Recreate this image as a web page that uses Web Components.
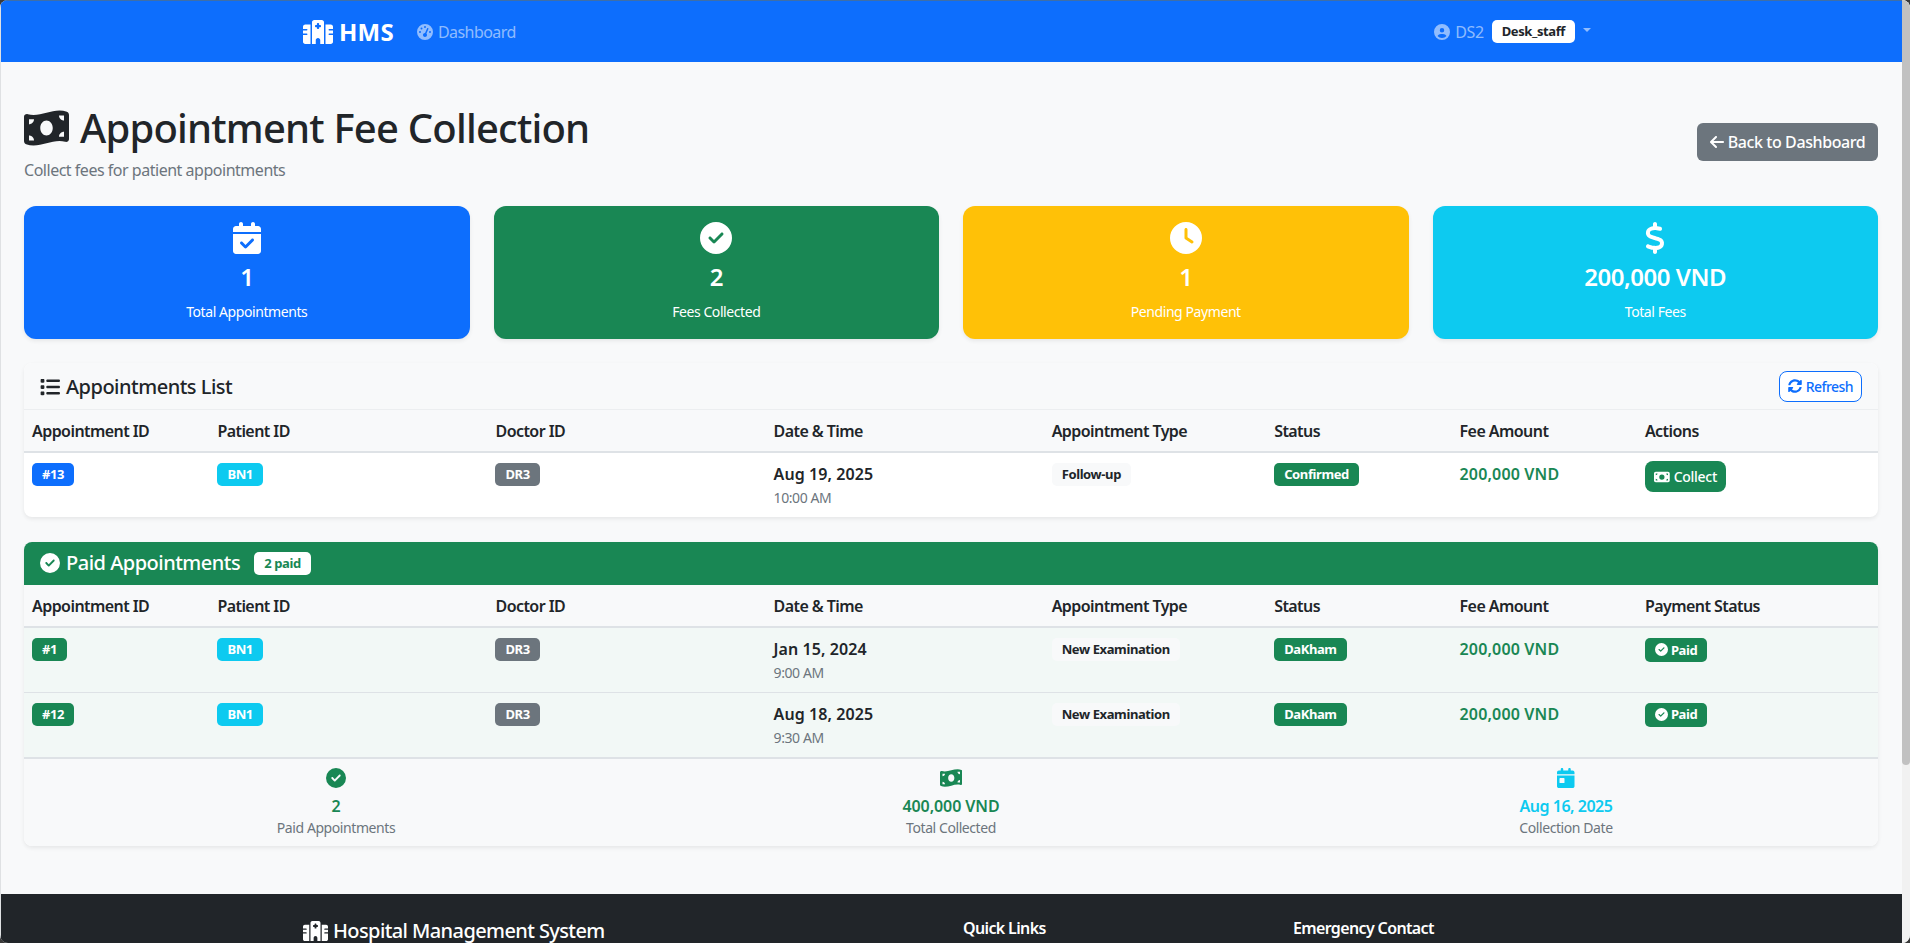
<!DOCTYPE html>
<html lang="en">
<head>
<meta charset="utf-8">
<title>Appointment Fee Collection</title>
<style>
  html, body { margin: 0; height: 943px; overflow: hidden; background: #3a3a3a; }
  body { font-family: "Noto Sans", "Open Sans", sans-serif; color: #212529; }
</style>
</head>
<body>
<hms-app></hms-app>

<script>
const ICONS = {
  hospital: [640, 'M192 48c0-26.5 21.5-48 48-48H400c26.5 0 48 21.5 48 48V512H368V432c0-26.5-21.5-48-48-48s-48 21.5-48 48v80H192V48zM48 96H160V512H48c-26.5 0-48-21.5-48-48V320H80c8.8 0 16-7.2 16-16s-7.2-16-16-16H0V224H80c8.8 0 16-7.2 16-16s-7.2-16-16-16H0V144c0-26.5 21.5-48 48-48zm544 0c26.5 0 48 21.5 48 48v48H560c-8.8 0-16 7.2-16 16s7.2 16 16 16h80v64H560c-8.8 0-16 7.2-16 16s7.2 16 16 16h80V464c0 26.5-21.5 48-48 48H480V96H592zM312 64c-8.8 0-16 7.2-16 16v24H272c-8.8 0-16 7.2-16 16v16c0 8.8 7.2 16 16 16h24v24c0 8.8 7.2 16 16 16h16c8.8 0 16-7.2 16-16V152h24c8.8 0 16-7.2 16-16V120c0-8.8-7.2-16-16-16H344V80c0-8.8-7.2-16-16-16H312z'],
  gauge: [512, 'M0 256a256 256 0 1 1 512 0A256 256 0 1 1 0 256zM288 96a32 32 0 1 0 -64 0 32 32 0 1 0 64 0zM256 416c35.3 0 64-28.7 64-64c0-17.4-6.9-33.1-18.1-44.6L366 161.7c5.3-12.1-.2-26.3-12.3-31.6s-26.3 .2-31.6 12.3L257.9 288c-.6 0-1.3 0-1.9 0c-35.3 0-64 28.7-64 64s28.7 64 64 64zM176 144a32 32 0 1 0 -64 0 32 32 0 1 0 64 0zM96 288a32 32 0 1 0 0-64 32 32 0 1 0 0 64zm352-32a32 32 0 1 0 -64 0 32 32 0 1 0 64 0z'],
  user: [512, 'M399 384.2C376.9 345.8 335.4 320 288 320H224c-47.4 0-88.9 25.8-111 64.2c35.2 39.2 86.2 63.8 143 63.8s107.8-24.7 143-63.8zM0 256a256 256 0 1 1 512 0A256 256 0 1 1 0 256zm256 16a72 72 0 1 0 0-144 72 72 0 1 0 0 144z'],
  wave: [576, 'M0 112.5V422.3c0 18 10.1 35 27 41.3c87 32.5 174 10.3 261-11.9c79.8-20.3 159.6-40.7 239.3-18.9c23 6.3 48.7-9.5 48.7-33.4V89.7c0-18-10.1-35-27-41.3C462 15.9 375 38.1 288 60.3C208.2 80.6 128.4 100.9 48.7 79.1C25.6 72.8 0 88.6 0 112.5zM288 352c-44.2 0-80-43-80-96s35.8-96 80-96s80 43 80 96s-35.8 96-80 96zM64 352c35.3 0 64 28.7 64 64H64V352zm64-208c0 35.3-28.7 64-64 64V144h64zM512 304v64H448c0-35.3 28.7-64 64-64zM448 96h64v64c-35.3 0-64-28.7-64-64z'],
  bill: [576, 'M64 64C28.7 64 0 92.7 0 128V384c0 35.3 28.7 64 64 64H512c35.3 0 64-28.7 64-64V128c0-35.3-28.7-64-64-64H64zm64 320H64V320c35.3 0 64 28.7 64 64zM64 192V128h64c0 35.3-28.7 64-64 64zM448 384c0-35.3 28.7-64 64-64v64H448zm64-192c-35.3 0-64-28.7-64-64h64v64zM288 160a96 96 0 1 1 0 192 96 96 0 1 1 0-192z'],
  back: [448, 'M9.4 233.4c-12.5 12.5-12.5 32.8 0 45.3l160 160c12.5 12.5 32.8 12.5 45.3 0s12.5-32.8 0-45.3L109.2 288 416 288c17.7 0 32-14.3 32-32s-14.3-32-32-32l-306.7 0L214.6 118.6c12.5-12.5 12.5-32.8 0-45.3s-32.8-12.5-45.3 0l-160 160z'],
  calcheck: [448, 'M128 0c17.7 0 32 14.3 32 32V64H288V32c0-17.7 14.3-32 32-32s32 14.3 32 32V64h48c26.5 0 48 21.5 48 48v48H0V112C0 85.5 21.5 64 48 64H96V32c0-17.7 14.3-32 32-32zM0 192H448V464c0 26.5-21.5 48-48 48H48c-26.5 0-48-21.5-48-48V192zM329 305c9.4-9.4 9.4-24.6 0-33.9s-24.6-9.4-33.9 0l-95 95-47-47c-9.4-9.4-24.6-9.4-33.9 0s-9.4 24.6 0 33.9l64 64c9.4 9.4 24.6 9.4 33.9 0L329 305z'],
  calday: [448, 'M128 0c17.7 0 32 14.3 32 32V64H288V32c0-17.7 14.3-32 32-32s32 14.3 32 32V64h48c26.5 0 48 21.5 48 48v48H0V112C0 85.5 21.5 64 48 64H96V32c0-17.7 14.3-32 32-32zM0 192H448V464c0 26.5-21.5 48-48 48H48c-26.5 0-48-21.5-48-48V192zm80 64c-8.8 0-16 7.2-16 16v96c0 8.8 7.2 16 16 16h96c8.8 0 16-7.2 16-16V272c0-8.8-7.2-16-16-16H80z'],
  check: [512, 'M256 512A256 256 0 1 0 256 0a256 256 0 1 0 0 512zM369 209L241 337c-9.4 9.4-24.6 9.4-33.9 0l-64-64c-9.4-9.4-9.4-24.6 0-33.9s24.6-9.4 33.9 0l47 47L335 175c9.4-9.4 24.6-9.4 33.9 0s9.4 24.6 0 33.9z'],
  clock: [512, 'M256 0a256 256 0 1 1 0 512A256 256 0 1 1 256 0zM232 120V256c0 8 4 15.5 10.7 20l96 64c11 7.4 25.9 4.4 33.3-6.7s4.4-25.9-6.7-33.3L280 243.2V120c0-13.3-10.7-24-24-24s-24 10.7-24 24z'],
  dollar: [320, 'M160 0c17.7 0 32 14.3 32 32V67.7c1.6 .2 3.1 .4 4.7 .7c.4 .1 .7 .1 1.1 .2l48 8.8c17.4 3.2 28.9 19.9 25.7 37.2s-19.9 28.9-37.2 25.7l-47.5-8.7c-31.3-4.6-58.9-1.5-78.3 6.2s-27.2 18.3-29 28.1c-2 10.7-.5 16.7 1.2 20.4c1.8 3.9 5.5 8.3 12.8 13.2c16.3 10.7 41.3 17.7 73.7 26.3l2.9 .8c28.6 7.6 63.6 16.8 89.6 33.8c14.2 9.3 27.6 21.9 35.9 39.5c8.5 17.9 10.3 37.9 6.4 59.2c-6.9 38-33.1 63.4-65.6 76.7c-13.7 5.6-28.6 9.2-44.4 11V480c0 17.7-14.3 32-32 32s-32-14.3-32-32V445.1c-.4-.1-.9-.1-1.3-.2l-.2 0 0 0c-24.4-3.8-64.5-14.3-91.5-26.3c-16.1-7.2-23.4-26.1-16.2-42.2s26.1-23.4 42.2-16.2c20.9 9.3 55.3 18.5 75.2 21.6c31.9 4.7 58.2 2 76-5.3c16.9-6.9 24.6-16.9 26.8-28.9c1.9-10.6 .4-16.7-1.3-20.4c-1.9-4-5.6-8.4-13-13.3c-16.4-10.7-41.5-17.7-74-26.3l-2.8-.7 0 0C119.4 279.3 84.4 270 58.4 253c-14.2-9.3-27.5-22-35.8-39.6c-8.4-17.9-10.1-37.9-6.1-59.2C23.7 116 52.3 91.2 84.8 78.3c13.3-5.3 27.9-8.9 43.2-11V32c0-17.7 14.3-32 32-32z'],
  list: [512, 'M40 48C26.7 48 16 58.7 16 72v48c0 13.3 10.7 24 24 24H88c13.3 0 24-10.7 24-24V72c0-13.3-10.7-24-24-24H40zM192 64c-17.7 0-32 14.3-32 32s14.3 32 32 32H480c17.7 0 32-14.3 32-32s-14.3-32-32-32H192zm0 160c-17.7 0-32 14.3-32 32s14.3 32 32 32H480c17.7 0 32-14.3 32-32s-14.3-32-32-32H192zm0 160c-17.7 0-32 14.3-32 32s14.3 32 32 32H480c17.7 0 32-14.3 32-32s-14.3-32-32-32H192zM16 232v48c0 13.3 10.7 24 24 24H88c13.3 0 24-10.7 24-24V232c0-13.3-10.7-24-24-24H40c-13.3 0-24 10.7-24 24zM40 368c-13.3 0-24 10.7-24 24v48c0 13.3 10.7 24 24 24H88c13.3 0 24-10.7 24-24V392c0-13.3-10.7-24-24-24H40z'],
  sync: [512, 'M370.72 133.28C339.458 104.008 298.888 87.962 255.848 88c-77.458.068-144.328 53.178-162.791 126.85-1.344 5.363-6.122 9.15-11.651 9.15H24.103c-7.498 0-13.194-6.807-11.807-14.176C33.933 94.924 134.813 8 256 8c66.448 0 126.791 26.136 171.315 68.685L463.03 40.97C478.149 25.851 504 36.559 504 57.941V192c0 13.255-10.745 24-24 24H345.941c-21.382 0-32.09-25.851-16.971-40.971l41.75-41.749zM32 296h134.059c21.382 0 32.09 25.851 16.971 40.971l-41.75 41.75c31.262 29.273 71.835 45.319 114.876 45.28 77.418-.07 144.315-53.144 162.787-126.849 1.344-5.363 6.122-9.15 11.651-9.15h57.304c7.498 0 13.194 6.807 11.807 14.176C478.067 417.076 377.187 504 256 504c-66.448 0-126.791-26.136-171.315-68.685L48.97 471.03C33.851 486.149 8 475.441 8 454.059V320c0-13.255 10.745-24 24-24z']
};

// icon sized like font awesome: height = font-size, width from the viewbox
class FaIcon extends HTMLElement {
  connectedCallback() {
    if (this.shadowRoot) return;
    const [w, d] = ICONS[this.getAttribute('name')];
    const root = this.attachShadow({ mode: 'open' });
    root.innerHTML = `
      <style>
        :host { display: inline-block; flex: none; height: 1em; width: ${w / 512}em; line-height: 0; vertical-align: -0.125em; }
        svg { width: 100%; height: 100%; display: block; fill: currentColor; }
      </style>
      <svg viewBox="0 0 ${w} 512"><path d="${d}"/></svg>`;
  }
}

class HmsBadge extends HTMLElement {
  connectedCallback() {
    if (this.shadowRoot) return;
    const root = this.attachShadow({ mode: 'open' });
    root.innerHTML = `
      <style>
        :host {
          display: inline-block; padding: 4px 10px; border-radius: 5px;
          font-size: 13px; line-height: 15px; font-weight: 700; white-space: nowrap;
          letter-spacing: -0.03em; vertical-align: top;
          color: var(--fg, #fff); background: var(--bg, #6c757d);
        }
      </style>
      <slot></slot>`;
  }
}

class HmsNavbar extends HTMLElement {
  constructor() {
    super();
    this.attachShadow({ mode: 'open' }).innerHTML = `
      <style>
        :host { display: block; background: #0d6efd; height: 62px; flex: none; border-top: 1px solid #3f6fa8; box-sizing: border-box; }
        .wrap { width: 1296px; margin: 0 auto; height: 100%; display: flex; align-items: center; justify-content: space-between; }
        .left, .right { display: flex; align-items: center; }
        .brand { color: #fff; font-size: 24px; line-height: 29px; font-weight: 700; display: flex; align-items: center; gap: 6px; letter-spacing: 0.01em; }
        .link { color: rgba(255,255,255,.55); font-size: 16px; margin-left: 23px; display: flex; align-items: center; gap: 5px; letter-spacing: -0.035em; }
        .user { color: rgba(255,255,255,.55); font-size: 16px; display: flex; align-items: center; gap: 5px; letter-spacing: -0.025em; }
        .caret { width: 0; height: 0; border-top: 4.8px solid rgba(255,255,255,.55); border-left: 4.8px solid transparent; border-right: 4.8px solid transparent; margin: 0 8px 3px 8px; }
        hms-badge { --bg: #fff; --fg: #212529; margin-left: 8px; padding: 4px 10px; }
      </style>
      <div class="wrap">
        <div class="left">
          <div class="brand"><fa-icon name="hospital"></fa-icon><span>HMS</span></div>
          <div class="link"><fa-icon name="gauge"></fa-icon><span>Dashboard</span></div>
        </div>
        <div class="right">
          <div class="user"><fa-icon name="user"></fa-icon><span>DS2</span></div>
          <hms-badge>Desk_staff</hms-badge>
          <span class="caret"></span>
        </div>
      </div>`;
  }
}

class PageHeader extends HTMLElement {
  constructor() {
    super();
    this.attachShadow({ mode: 'open' }).innerHTML = `
      <style>
        :host { display: flex; align-items: center; justify-content: space-between; padding-top: 42px; margin-bottom: 24px; }
        h1 { margin: 0 0 6px; font-size: 40px; line-height: 48px; font-weight: 500; letter-spacing: -0.02em; display: flex; align-items: center; gap: 11px; }
        p { margin: 0; color: #6c757d; font-size: 16px; line-height: 24px; letter-spacing: -0.03em; }
        .back { background: #6c757d; color: #fff; height: 38px; box-sizing: border-box; width: 181px; border-radius: 6px; font-size: 16px; font-weight: 500; display: flex; align-items: center; justify-content: center; gap: 4px; margin-bottom: 3px; letter-spacing: -0.025em; }
      </style>
      <div>
        <h1><fa-icon name="wave"></fa-icon><span>Appointment Fee Collection</span></h1>
        <p>Collect fees for patient appointments</p>
      </div>
      <div class="back"><fa-icon name="back"></fa-icon><span>Back to Dashboard</span></div>`;
  }
}

class StatCard extends HTMLElement {
  connectedCallback() {
    if (this.shadowRoot) return;
    const a = n => this.getAttribute(n);
    this.attachShadow({ mode: 'open' }).innerHTML = `
      <style>
        :host { display: block; height: 133px; box-sizing: border-box; padding: 16px; border-radius: 12px; background: ${a('color')}; color: #fff; text-align: center; box-shadow: 0 2px 4px rgba(0,0,0,.075); }
        .icon { font-size: 32px; height: 32px; line-height: 0; margin-bottom: 8px; }
        .val { font-size: 24px; line-height: 29px; font-weight: 600; margin-bottom: 9px; letter-spacing: -0.02em; }
        .lbl { font-size: 14px; line-height: 24px; letter-spacing: -0.03em; }
        fa-icon { vertical-align: top; }
      </style>
      <div class="icon"><fa-icon name="${a('icon')}"></fa-icon></div>
      <div class="val">${a('value')}</div>
      <div class="lbl">${a('label')}</div>`;
  }
}

class ListCard extends HTMLElement {
  constructor() {
    super();
    this.attachShadow({ mode: 'open' }).innerHTML = `
      <style>
        :host { display: block; background: #fff; border-radius: 8px; overflow: hidden; box-shadow: 0 2px 4px rgba(0,0,0,.075); margin-bottom: 25px; }
      </style>
      <slot name="head"></slot>
      <slot></slot>
      <slot name="foot"></slot>`;
  }
}

class CardHead extends HTMLElement {
  constructor() {
    super();
    this.attachShadow({ mode: 'open' }).innerHTML = `
      <style>
        :host { display: flex; align-items: center; justify-content: space-between; box-sizing: border-box; padding: 0 16px; height: 47px; background: #f8f9fa; border-bottom: 1px solid #eceef0; }
        :host([tone="green"]) { background: #198754; color: #fff; height: 43px; border-bottom: 0; }
        h5 { margin: 1px 0 0; font-size: 20px; line-height: 24px; font-weight: 500; letter-spacing: -0.025em; display: flex; align-items: center; gap: 6px; }
        :host([tone="green"]) h5 { margin-top: -1px; }
      </style>
      <h5><slot name="title"></slot></h5>
      <slot></slot>`;
  }
}

const COLS = ['10%', '15%', '15%', '15%', '12%', '10%', '10%', '13%'];

class FeeTable extends HTMLElement {
  constructor() {
    super();
    this.attachShadow({ mode: 'open' });
  }
  static get observedAttributes() {
    return ['data'];
  }
  attributeChangedCallback(attribute, oldValue, newValue) {
    if (oldValue !== newValue) this.render(JSON.parse(newValue));
  }
  render(data) {
    const head = data.head.map((h, i) => `<th style="width:${COLS[i]}">${h}</th>`).join('');
    const rows = data.rows.map(r => `
      <tr class="${data.tint ? 'tint' : ''}">
        <td><hms-badge style="--bg:${data.idColor}">${r.id}</hms-badge></td>
        <td><hms-badge style="--bg:#0dcaf0">BN1</hms-badge></td>
        <td><hms-badge style="--bg:#6c757d">DR3</hms-badge></td>
        <td><div class="date">${r.date}</div><div class="time">${r.time}</div></td>
        <td><hms-badge style="--bg:#f8f9fa;--fg:#212529">${r.type}</hms-badge></td>
        <td><hms-badge style="--bg:#198754">${r.status}</hms-badge></td>
        <td><div class="fee">200,000 VND</div></td>
        <td>${r.action === 'collect'
          ? '<div class="collect"><fa-icon name="bill"></fa-icon>Collect</div>'
          : '<hms-badge class="paid" style="--bg:#198754"><fa-icon name="check"></fa-icon> Paid</hms-badge>'}</td>
      </tr>`).join('');
    this.shadowRoot.innerHTML = `
      <style>
        :host { display: block; }
        table { width: 100%; border-collapse: collapse; table-layout: fixed; }
        th { background: #f8f9fa; text-align: left; font-size: 16px; font-weight: 600; height: 42px; padding: 0 8px; box-sizing: border-box; border-bottom: 2px solid #dee2e6; letter-spacing: -0.035em; color: #212529; }
        td { padding: 10px 8px 0; height: 65px; box-sizing: border-box; vertical-align: top; font-size: 16px; border-bottom: 1px solid #dee2e6; }
        tr.tint td { background: #f2f8f6; }
        tr:last-child td { border-bottom: 0; }
        .date { font-weight: 600; font-size: 16px; line-height: 24px; letter-spacing: 0.005em; margin-top: -1px; }
        .time { color: #6c757d; font-size: 14px; line-height: 21px; margin-top: 1px; letter-spacing: -0.03em; }
        .fee { color: #198754; font-weight: 600; font-size: 16px; line-height: 24px; letter-spacing: 0.01em; margin-top: -1px; }
        .collect { display: flex; width: fit-content; align-items: center; gap: 4px; background: #198754; color: #fff; height: 31px; margin-top: -2px; padding: 0 9px 0 9px; border-radius: 8px; font-size: 14px; font-weight: 500; letter-spacing: -0.02em; }
        .paid { padding: 4.5px 10px; }
      </style>
      <table><thead><tr>${head}</tr></thead><tbody>${rows}</tbody></table>`;
  }
}

class SummaryItem extends HTMLElement {
  connectedCallback() {
    if (this.shadowRoot) return;
    const a = n => this.getAttribute(n);
    this.attachShadow({ mode: 'open' }).innerHTML = `
      <style>
        :host { display: block; text-align: center; color: ${a('color')}; }
        .icon { font-size: 20px; height: 20px; line-height: 0; margin-bottom: 6px; }
        fa-icon { vertical-align: top; }
        .val { font-size: 16px; line-height: 24px; font-weight: 600; letter-spacing: var(--ls, -0.005em); }
        .lbl { font-size: 14px; line-height: 21px; margin-top: -1.5px; color: #6c757d; letter-spacing: -0.03em; }
      </style>
      <div class="icon"><fa-icon name="${a('icon')}"></fa-icon></div>
      <div class="val">${a('value')}</div>
      <div class="lbl">${a('label')}</div>`;
  }
}

class HmsFooter extends HTMLElement {
  constructor() {
    super();
    this.attachShadow({ mode: 'open' }).innerHTML = `
      <style>
        :host { display: block; background: #212529; color: #fff; padding-top: 25px; flex: 1; }
        .wrap { width: 1296px; margin: 0 auto; display: grid; grid-template-columns: 660px 330px 1fr; }
        h5 { margin: 0; font-size: 20px; line-height: 24px; font-weight: 500; letter-spacing: -0.03em; display: flex; align-items: center; gap: 5px; }
        h6 { margin: 0; font-size: 16px; line-height: 19px; font-weight: 600; letter-spacing: -0.04em; }
      </style>
      <div class="wrap">
        <h5><fa-icon name="hospital"></fa-icon><span>Hospital Management System</span></h5>
        <h6>Quick Links</h6>
        <h6>Emergency Contact</h6>
      </div>`;
  }
}

class HmsApp extends HTMLElement {
  constructor() {
    super();
    const unpaid = {
      head: ['Appointment ID', 'Patient ID', 'Doctor ID', 'Date &amp; Time', 'Appointment Type', 'Status', 'Fee Amount', 'Actions'],
      idColor: '#0d6efd',
      rows: [{ id: '#13', date: 'Aug 19, 2025', time: '10:00 AM', type: 'Follow-up', status: 'Confirmed', action: 'collect' }]
    };
    const paid = {
      head: ['Appointment ID', 'Patient ID', 'Doctor ID', 'Date &amp; Time', 'Appointment Type', 'Status', 'Fee Amount', 'Payment Status'],
      idColor: '#198754',
      tint: true,
      rows: [
        { id: '#1', date: 'Jan 15, 2024', time: '9:00 AM', type: 'New Examination', status: 'DaKham', action: 'paid' },
        { id: '#12', date: 'Aug 18, 2025', time: '9:30 AM', type: 'New Examination', status: 'DaKham', action: 'paid' }
      ]
    };
    this.attachShadow({ mode: 'open' }).innerHTML = `
      <style>
        :host { display: flex; height: 943px; overflow: hidden; border-radius: 8px; background: #f8f9fa; position: relative; }
        /* thin window edge that lies over the page */
        :host::after { content: ""; position: absolute; left: 0; top: 0; bottom: 0; width: 1px; background: #dfe1e3; }
        .page { flex: 1; min-width: 0; display: flex; flex-direction: column; overflow: hidden; }
        main { padding: 0 24px; height: 832px; box-sizing: border-box; flex: none; }
        .stats { display: grid; grid-template-columns: repeat(4, 1fr); gap: 24px; margin-bottom: 24px; }
        .bar { width: 8px; flex: none; background: #f1f1f1; }
        .thumb { height: 765px; background: #c1c1c1; border-radius: 0 0 4px 4px; }
        .refresh { display: inline-flex; align-items: center; gap: 4px; height: 31px; box-sizing: border-box; padding: 0 8px; border: 1px solid #0d6efd; border-radius: 8px; color: #0d6efd; background: #fff; font-size: 14px; font-weight: 500; letter-spacing: -0.04em; }
        .count { --bg: #fff; --fg: #198754; margin-left: 8px; }
        .sum { display: grid; grid-template-columns: repeat(3, 1fr); background: #f8f9fa; border-top: 2px solid #dee2e6; padding: 9px 4.5px 10px; height: 89px; box-sizing: border-box; }
      </style>
      <div class="page">
        <hms-navbar></hms-navbar>
        <main>
          <page-header></page-header>
          <div class="stats">
            <stat-card color="#0d6efd" icon="calcheck" value="1" label="Total Appointments"></stat-card>
            <stat-card color="#198754" icon="check" value="2" label="Fees Collected"></stat-card>
            <stat-card color="#ffc107" icon="clock" value="1" label="Pending Payment"></stat-card>
            <stat-card color="#0dcaf0" icon="dollar" value="200,000 VND" label="Total Fees"></stat-card>
          </div>
          <list-card>
            <card-head slot="head">
              <fa-icon slot="title" name="list"></fa-icon><span slot="title">Appointments List</span>
              <span class="refresh"><fa-icon name="sync"></fa-icon>Refresh</span>
            </card-head>
            <fee-table id="unpaid"></fee-table>
          </list-card>
          <list-card>
            <card-head slot="head" tone="green">
              <fa-icon slot="title" name="check"></fa-icon><span slot="title">Paid Appointments</span>
              <hms-badge slot="title" class="count">2 paid</hms-badge>
            </card-head>
            <fee-table id="paid"></fee-table>
            <div class="sum" slot="foot">
              <summary-item color="#198754" icon="check" value="2" label="Paid Appointments"></summary-item>
              <summary-item color="#198754" icon="wave" value="400,000 VND" label="Total Collected"></summary-item>
              <summary-item color="#0dcaf0" icon="calday" value="Aug 16, 2025" label="Collection Date" style="--ls:-0.03em"></summary-item>
            </div>
          </list-card>
        </main>
        <hms-footer></hms-footer>
      </div>
      <div class="bar"><div class="thumb"></div></div>`;
    this.shadowRoot.getElementById('unpaid').setAttribute('data', JSON.stringify(unpaid));
    this.shadowRoot.getElementById('paid').setAttribute('data', JSON.stringify(paid));
  }
}

customElements.define('fa-icon', FaIcon);
customElements.define('hms-badge', HmsBadge);
customElements.define('hms-navbar', HmsNavbar);
customElements.define('page-header', PageHeader);
customElements.define('stat-card', StatCard);
customElements.define('list-card', ListCard);
customElements.define('card-head', CardHead);
customElements.define('fee-table', FeeTable);
customElements.define('summary-item', SummaryItem);
customElements.define('hms-footer', HmsFooter);
customElements.define('hms-app', HmsApp);
</script>
</body>
</html>
